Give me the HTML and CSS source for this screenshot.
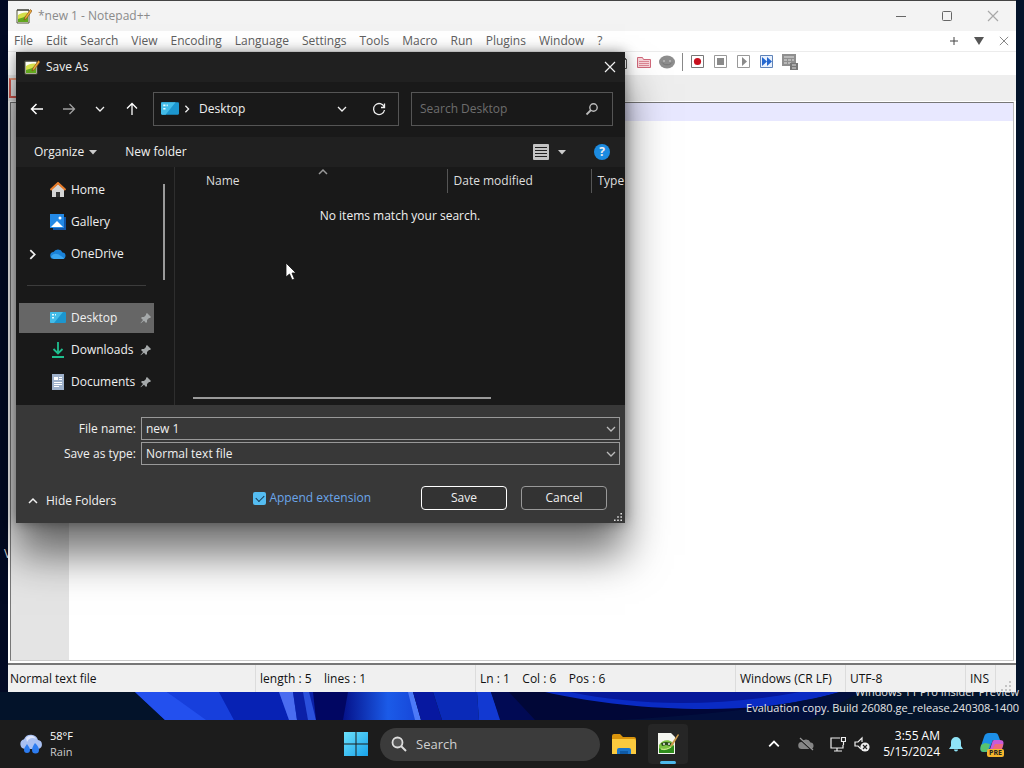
FILE: index.html
```html
<!DOCTYPE html>
<html lang="en">
<head>
    <meta charset="UTF-8">
    <meta name="viewport" content="width=device-width, initial-scale=1.0">
    <title>*new 1 - Notepad++</title>
    <link rel="stylesheet" href="styles.css">
</head>
<body>
    <!-- shared icons -->
    <svg class="sprite" aria-hidden="true">
        <symbol id="i-npp" viewBox="0 0 16 16">
            <path d="M1 2h12v13H1z" fill="#fdfdf5" stroke="#55583c"/>
            <path d="M2 1v2M4 1v2M6 1v2M8 1v2M10 1v2M12 1v2" stroke="#333"/>
            <path d="M2 7c3-2 7-3 10-2v9H2z" fill="#d5e04a"/>
            <path d="M2 11c3-1 7-2 10-4v7H2z" fill="#63a81e"/>
            <path d="M14.500 1.500L9 9l-1 3 2.500-1.500L16 3z" fill="#f0a93a" stroke="#7a4a12" stroke-width=".6"/>
        </symbol>
        <symbol id="i-down" viewBox="0 0 10 10">
            <path d="M1 3l4 4 4-4" fill="none" stroke="currentColor" stroke-width="1.300"/>
        </symbol>
        <symbol id="i-up" viewBox="0 0 10 10">
            <path d="M1 7l4-4 4 4" fill="none" stroke="currentColor" stroke-width="1.500"/>
        </symbol>
        <symbol id="i-right" viewBox="0 0 10 10">
            <path d="M3 1l4 4-4 4" fill="none" stroke="currentColor" stroke-width="1.600"/>
        </symbol>
        <symbol id="i-close" viewBox="0 0 12 12">
            <path d="M1 1l10 10M11 1L1 11" fill="none" stroke="currentColor" stroke-width="1.200"/>
        </symbol>
        <symbol id="i-caret" viewBox="0 0 8 5">
            <path d="M0 0h8L4 4.500z" fill="currentColor"/>
        </symbol>
        <symbol id="i-pin" viewBox="0 0 12 12">
            <path d="M7 1l4 4-1 1-1 0-2 2 0 2-1 1-2-2.300L.8 11.200.500 11 3 8 1 6l1-1h2l2-2V2z" fill="currentColor"/>
        </symbol>
        <symbol id="i-desktop" viewBox="0 0 16 16">
            <path d="M1 2h14a1 1 0 0 1 1 1v9a1 1 0 0 1-1 1H1a1 1 0 0 1-1-1V3a1 1 0 0 1 1-1z" fill="#1c96cf"/>
            <path d="M1 2h12L4 13H1a1 1 0 0 1-1-1V3a1 1 0 0 1 1-1z" fill="#43bce8"/>
            <path d="M2 4h2v1.500H2zM2 7h2v1.500H2zM5 4h1v1.500H5z" fill="#e6fbff"/>
        </symbol>
    </svg>

    <main class="desktop">
        <svg class="wallpaper" viewBox="0 0 1024 28" preserveAspectRatio="none" aria-hidden="true">
            <defs>
                <linearGradient id="glow">
                    <stop offset="0" stop-color="#05128a"/>
                    <stop offset=".6" stop-color="#1b5be8"/>
                    <stop offset="1" stop-color="#1746d8"/>
                </linearGradient>
            </defs>
            <path d="M0 0h1024v28H0z" fill="#03132a"/>
            <path d="M135 0h170l25 28H165z" fill="#0d2fc9"/>
            <path d="M135 0h32l45 28h-47z" fill="#2350ee"/>
            <path d="M167 0h52l15 28h-28z" fill="#173fdc"/>
            <path d="M219 0h60l10 28h-55z" fill="#0722b4"/>
            <path d="M279 0h14l4 28h-8z" fill="#4a6cf0"/>
            <path d="M293 0h24v28h-20z" fill="#0b20a8"/>
            <path d="M303 0h6l7 28h-8z" fill="#2b50dc"/>
            <path d="M313 0h42v28h-39z" fill="#010662"/>
            <path d="M348 0h62l8 28h-75z" fill="url(#glow)"/>
            <path d="M408 0h5l8 28h-6z" fill="#4d7af8"/>
            <path d="M413 0h20l9 28h-21z" fill="#0718a0"/>
            <path d="M433 0h44l2 28h-37z" fill="#0a2ab8"/>
            <path d="M477 0h14l10 28h-22z" fill="#1239d2"/>
            <path d="M491 0h70l80 28H500z" fill="#010a54"/>
            <path d="M509 0h60c40 12 110 19 190 10v18H535z" fill="#010737"/>
            <path d="M545 0h295c-40 12-90 18-145 17-60-1-110-8-150-17z" fill="#0a2bc4"/>
            <path d="M570 0h230c-80 15-165 14-230 0z" fill="#06189a"/>
            <path d="M620 28c100-6 170-14 220-28h60v28z" fill="#020f3d"/>
            <path d="M860 0h164v28H810z" fill="#04142b"/>
        </svg>

        <div class="icon-label">V</div>
        <div class="watermark">
            <div>Windows 11 Pro Insider Preview</div>
            <div>Evaluation copy. Build 26080.ge_release.240308-1400</div>
        </div>

        <!-- Notepad++ -->
        <section class="editor-window">
            <header class="editor-title">
                <svg class="icon16"><use href="#i-npp"/></svg>
                <span class="editor-name">*new 1 - Notepad++</span>
                <button class="win-btn" aria-label="Minimize"><svg viewBox="0 0 12 12"><path d="M1 6.500h10" stroke="currentColor"/></svg></button>
                <button class="win-btn" aria-label="Maximize"><svg viewBox="0 0 12 12"><rect x="1.500" y="1.500" width="9" height="9" rx="1" fill="none" stroke="currentColor"/></svg></button>
                <button class="win-btn dim" aria-label="Close"><svg><use href="#i-close"/></svg></button>
            </header>
            <nav class="menu-bar">
                <button>File</button>
                <button>Edit</button>
                <button>Search</button>
                <button>View</button>
                <button>Encoding</button>
                <button>Language</button>
                <button>Settings</button>
                <button>Tools</button>
                <button>Macro</button>
                <button>Run</button>
                <button>Plugins</button>
                <button>Window</button>
                <button>?</button>
                <div class="tab-tools">
                    <button aria-label="New tab"><svg viewBox="0 0 10 10"><path d="M5 1v8M1 5h8" stroke="#444" fill="none"/></svg></button>
                    <button aria-label="Tab list"><svg viewBox="0 0 10 10"><path d="M0 1h10L5 9z" fill="#555"/></svg></button>
                    <button aria-label="Close tab"><svg class="tab-close"><use href="#i-close"/></svg></button>
                </div>
            </nav>
            <div class="toolbar">
                <button aria-label="Document map"><svg viewBox="0 0 16 16"><path d="M3.500 1.500h6l4 4v9h-10z" fill="#fff" stroke="#555"/><path d="M9.500 1.500v4h4" fill="none" stroke="#555"/></svg></button>
                <button aria-label="Folder as workspace"><svg viewBox="0 0 16 16"><path d="M1.500 3.500h5l1 2h7v8h-13z" fill="#f7d3d8" stroke="#d0687a"/><path d="M3 7.500h10M3 9.500h10M3 11.500h10" stroke="#dd8794"/></svg></button>
                <button aria-label="Monitoring"><svg viewBox="0 0 16 16"><ellipse cx="8" cy="8" rx="8" ry="6.500" fill="#8d8d8d"/><path d="M3 8.500c2 3 8 3 10 0" fill="none" stroke="#777"/><circle cx="5" cy="7" r="1" fill="#bbb"/><circle cx="11" cy="7" r="1" fill="#bbb"/></svg></button>
                <span class="tool-sep"></span>
                <button aria-label="Record macro"><svg viewBox="0 0 16 16"><path d="M1.500 1.500h12v12h-12z" fill="#fff" stroke="#777"/><circle cx="7.500" cy="7.500" r="3.600" fill="#c8101e"/></svg></button>
                <button aria-label="Stop recording"><svg viewBox="0 0 16 16"><path d="M1.500 1.500h12v12h-12z" fill="#fff" stroke="#999"/><path d="M4 4h7v7H4z" fill="#8a8a8a"/></svg></button>
                <button aria-label="Play macro"><svg viewBox="0 0 16 16"><path d="M1.500 1.500h12v12h-12z" fill="#fff" stroke="#999"/><path d="M6 3l5 4.500L6 12z" fill="#8a8a8a"/></svg></button>
                <button aria-label="Run macro many times"><svg viewBox="0 0 16 16"><path d="M1.500 1.500h12v12h-12z" fill="#e9f1fd" stroke="#5f83b8"/><path d="M3 3l5 4.500L3 12zM8 3l5 4.500L8 12z" fill="#2467cf"/></svg></button>
                <button aria-label="Save macro"><svg viewBox="0 0 16 16"><path d="M0 0h14v12H0z" fill="#8f8f8f"/><path d="M2 3h10M2 6h3M6 6h3M10 6h2M2 9h3M6 9h3" stroke="#e2e2e2"/><path d="M8 9h8v7H8z" fill="#777"/><path d="M10 11h4M10 14h4" stroke="#ddd"/></svg></button>
            </div>
            <div class="tab-strip"><span class="tab-icon"></span></div>
            <div class="edit-area">
                <div class="gutter"></div>
                <div class="page"><div class="caret-line"></div></div>
            </div>
            <footer class="status-bar">
                <span class="st-type">Normal text file</span>
                <span class="st-length">length : 5 &nbsp;&nbsp; lines : 1</span>
                <span class="st-pos">Ln : 1 &nbsp;&nbsp; Col : 6 &nbsp;&nbsp; Pos : 6</span>
                <span class="st-eol">Windows (CR LF)</span>
                <span class="st-enc">UTF-8</span>
                <span class="st-ins">INS</span>
                <span class="st-grip"><svg viewBox="0 0 12 12"><path d="M9 1h2v2H9zM9 5h2v2H9zM9 9h2v2H9zM5 5h2v2H5zM5 9h2v2H5zM1 9h2v2H1z" fill="#c4c4c4"/></svg></span>
            </footer>
        </section>

        <!-- Save As dialog -->
        <form class="dialog">
            <header class="dialog-title">
                <svg class="icon16"><use href="#i-npp"/></svg>
                <span>Save As</span>
                <button type="button" class="dialog-close" aria-label="Close"><svg><use href="#i-close"/></svg></button>
            </header>

            <div class="nav-row">
                <div class="nav-buttons">
                    <button type="button" aria-label="Back"><svg viewBox="0 0 14 14"><path d="M13 7H1.500M6.500 2l-5 5 5 5" fill="none" stroke="#fff" stroke-width="1.500"/></svg></button>
                    <button type="button" aria-label="Forward"><svg viewBox="0 0 14 14"><path d="M1 7h11.500M7.500 2l5 5-5 5" fill="none" stroke="#a0a0a0" stroke-width="1.300"/></svg></button>
                    <button type="button" aria-label="Recent locations"><svg class="icon10"><use href="#i-down"/></svg></button>
                    <button type="button" aria-label="Up"><svg viewBox="0 0 14 14"><path d="M7 13V1.500M2 6.500l5-5 5 5" fill="none" stroke="#fff" stroke-width="1.300"/></svg></button>
                </div>
                <div class="address">
                    <svg class="icon18"><use href="#i-desktop"/></svg>
                    <svg class="crumb-arrow"><use href="#i-right"/></svg>
                    <span class="crumb">Desktop</span>
                    <button type="button" aria-label="Previous locations"><svg class="icon10"><use href="#i-down"/></svg></button>
                    <button type="button" aria-label="Refresh"><svg viewBox="0 0 14 14"><path d="M12.200 5A5.500 5.500 0 1 0 12.500 8" fill="none" stroke="#eee" stroke-width="1.300"/><path d="M12.500 1.500v4H9" fill="none" stroke="#eee" stroke-width="1.300"/></svg></button>
                </div>
                <div class="search">
                    <input type="text" placeholder="Search Desktop" aria-label="Search Desktop">
                    <svg viewBox="0 0 14 14"><circle cx="8.500" cy="5.500" r="3.700" fill="none" stroke="#bbb" stroke-width="1.400"/><path d="M6 8l-4.500 4.500" stroke="#bbb" stroke-width="1.800"/></svg>
                </div>
            </div>

            <div class="command-row">
                <button type="button">Organize <svg class="caret"><use href="#i-caret"/></svg></button>
                <button type="button">New folder</button>
                <button type="button" class="view-btn" aria-label="Change your view"><svg class="view-icon" viewBox="0 0 16 16"><path d="M1 0h14a1 1 0 0 1 1 1v14a1 1 0 0 1-1 1H1a1 1 0 0 1-1-1V1a1 1 0 0 1 1-1z" fill="#c4c4c4"/><path d="M2 3.500h12M2 6.500h12M2 9.500h12M2 12.500h12" stroke="#222"/></svg><svg class="caret"><use href="#i-caret"/></svg></button>
                <button type="button" class="help-btn" aria-label="Help">?</button>
            </div>

            <div class="browser">
                <nav class="sidebar">
                    <a href="#home"><svg class="icon16" viewBox="0 0 16 16"><path d="M2 7l6-5 6 5v8H2z" fill="#d5d5d5"/><path d="M6 10h4v5H6z" fill="#333"/><path d="M.500 8L8 1l7.500 7" fill="none" stroke="#e87c2a" stroke-width="2"/></svg><span>Home</span></a>
                    <a href="#gallery"><svg class="icon16" viewBox="0 0 16 16"><path d="M3 3h13v13H3z" fill="#1156a8"/><path d="M0 0h14v14H0z" fill="#2389e6"/><path d="M1 13l6-6 6 6z" fill="#fff"/><circle cx="10" cy="4" r="1.500" fill="#fff"/></svg><span>Gallery</span></a>
                    <a href="#onedrive"><svg class="expand"><use href="#i-right"/></svg><svg class="icon16" viewBox="0 0 16 16"><path d="M4 13a3.500 3.500 0 0 1-.500-7A5 5 0 0 1 12.500 6.500 3.300 3.300 0 0 1 13 13z" fill="#1a82d8"/><path d="M1 11c2-4 6-4 10-1l3.500 2.500L13 13H4z" fill="#3aa5f0"/></svg><span>OneDrive</span></a>
                    <hr>
                    <a href="#desktop" class="selected"><svg class="icon16"><use href="#i-desktop"/></svg><span>Desktop</span><svg class="pin"><use href="#i-pin"/></svg></a>
                    <a href="#downloads"><svg class="icon16" viewBox="0 0 16 16"><path d="M8 0v11M3.500 7L8 11.500 12.500 7M2 15h12" fill="none" stroke="#1fbf8f" stroke-width="1.800"/></svg><span>Downloads</span><svg class="pin"><use href="#i-pin"/></svg></a>
                    <a href="#documents"><svg class="icon16" viewBox="0 0 16 16"><path d="M2 0h12v16H2z" fill="#9fb2cc"/><path d="M4 3h4v3H4z" fill="#fff"/><path d="M9 3.500h3M9 5.500h3M4 8.500h8M4 10.500h8M4 12.500h5" stroke="#fff"/></svg><span>Documents</span><svg class="pin"><use href="#i-pin"/></svg></a>
                    <div class="side-scroll"></div>
                </nav>
                <div class="file-list">
                    <table>
                        <thead>
                            <tr>
                                <th class="col-name">Name <svg class="sort-mark"><use href="#i-up"/></svg></th>
                                <th class="col-date">Date modified</th>
                                <th>Type</th>
                            </tr>
                        </thead>
                    </table>
                    <p class="empty">No items match your search.</p>
                    <div class="list-scroll"></div>
                </div>
            </div>

            <div class="dialog-foot">
                <div class="field">
                    <label for="file-name">File name:</label>
                    <div class="box">
                        <input type="text" id="file-name" value="new 1">
                        <svg class="icon10"><use href="#i-down"/></svg>
                    </div>
                </div>
                <div class="field">
                    <label for="file-type">Save as type:</label>
                    <div class="box">
                        <select id="file-type"><option>Normal text file</option></select>
                        <svg class="icon10"><use href="#i-down"/></svg>
                    </div>
                </div>
                <div class="actions">
                    <button type="button" class="hide-folders"><svg class="icon10"><use href="#i-up"/></svg>Hide Folders</button>
                    <label class="append"><input type="checkbox" checked>Append extension</label>
                    <button type="submit" class="btn primary">Save</button>
                    <button type="button" class="btn">Cancel</button>
                </div>
                <svg class="grip" viewBox="0 0 10 10"><path d="M8 0h2v2H8zM8 4h2v2H8zM8 8h2v2H8zM4 4h2v2H4zM4 8h2v2H4zM0 8h2v2H0z" fill="#ddd"/></svg>
            </div>
        </form>

        <svg class="cursor" viewBox="0 0 12 19" aria-hidden="true"><path d="M1 1v14l3.500-3 2.500 6 2.500-1L7 11h4z" fill="#fff" stroke="#111" stroke-width=".8"/></svg>
    </main>

    <footer class="taskbar">
        <a href="#weather" class="weather">
            <svg viewBox="0 0 24 24"><path d="M6 17a5 5 0 0 1-1-9.800A7.500 7.500 0 0 1 19 8a4.600 4.600 0 0 1 .500 9z" fill="#a9c0f2"/><path d="M7 6a6 6 0 0 1 10 1 6 6 0 0 0-9 3z" fill="#dfe6fb"/><path d="M8 12c2 3 3 4 3 6a3 3 0 0 1-6 0c0-2 1-3 3-6zM16 11c3 3 4 5 4 7a3.500 3.500 0 0 1-7 0c0-2 1-4 3-7z" fill="#2d7cf0"/></svg>
            <span>58°F<br><small>Rain</small></span>
        </a>
        <div class="apps">
            <button class="app" aria-label="Start"><svg viewBox="0 0 24 24"><path d="M0 0h11.500v11.500H0zM12.500 0H24v11.500H12.500zM0 12.500h11.500V24H0zM12.500 12.500H24V24H12.500z" fill="url(#win)"/><defs><linearGradient id="win" x2="1" y2="1"><stop stop-color="#6be0fb"/><stop offset="1" stop-color="#18a2ea"/></linearGradient></defs></svg></button>
            <div class="task-search">
                <svg viewBox="0 0 16 16"><circle cx="6.500" cy="6.500" r="5" fill="#555" stroke="#ddd" stroke-width="1.800"/><path d="M10 10l5 5" stroke="#ddd" stroke-width="2"/></svg>
                <input type="text" placeholder="Search" aria-label="Search">
            </div>
            <button class="app" aria-label="File Explorer"><svg viewBox="0 0 24 24"><path d="M0 4a2 2 0 0 1 2-2h6l3 3h11a2 2 0 0 1 2 2v13H0z" fill="#d9940c"/><path d="M0 7h22a2 2 0 0 1 2 2v13H0z" fill="#fbca3e"/><path d="M5 22v-4a2 2 0 0 1 2-2h10a2 2 0 0 1 2 2v4z" fill="#1b74c9"/><path d="M8 19h8v3H8z" fill="#0f5aa6"/></svg></button>
            <button class="app active" aria-label="Notepad++"><svg viewBox="0 0 24 24"><path d="M2 1h13l4 4v17H2z" fill="#f4f6f0"/><path d="M3 13c3-5 9-6 13-3 2 2 2 5 0 7-4 3-9 3-13 0z" fill="#7cc242"/><path d="M3 16c4 4 10 2 15-3v8H3z" fill="#2f8d1c"/><path d="M5 11l5-1 6 1-2 3-4-1-4 1z" fill="#2a4a1c"/><circle cx="8" cy="12" r="1" fill="#eee"/><circle cx="13" cy="12" r="1" fill="#eee"/><path d="M5 17c4 1 7 0 10-2" fill="none" stroke="#d6ef9a"/><path d="M22 2l-7 10-1 3 3-2 6-10z" fill="#c99a4c"/></svg></button>
        </div>
        <div class="tray">
            <button aria-label="Show hidden icons"><svg class="icon12"><use href="#i-up"/></svg></button>
            <button aria-label="OneDrive"><svg class="icon16" viewBox="0 0 16 16"><path d="M4 13a3.500 3.500 0 0 1-.500-7A5 5 0 0 1 12.500 6.500 3.300 3.300 0 0 1 13 13z" fill="#858585"/><path d="M1 2l13 12" stroke="#1c1c1c" stroke-width="2"/><path d="M2 2l13 12" stroke="#999" stroke-width="1.200"/></svg></button>
            <button aria-label="Network"><svg class="icon16" viewBox="0 0 16 16"><path d="M10 2H1v10h12V9M4 15h8M7 12v3" fill="none" stroke="#eee" stroke-width="1.200"/><path d="M11.500 1.500h4v4h-4zM13.500 5.500V9" fill="#1c1c1c" stroke="#eee" stroke-width="1.200"/></svg></button>
            <button aria-label="Volume"><svg class="icon16" viewBox="0 0 16 16"><path d="M7 13L4 10H1V6h3l4-4v4" fill="none" stroke="#eee" stroke-width="1.200"/><circle cx="11" cy="11" r="4.600" fill="#eee"/><path d="M9 9l4 4M13 9l-4 4" stroke="#222" stroke-width="1.200"/></svg></button>
            <div class="clock">3:55 AM<br>5/15/2024</div>
            <button aria-label="Notifications"><svg class="icon16" viewBox="0 0 16 16"><path d="M8 1a5 5 0 0 1 5 5v4l2 3H1l2-3V6a5 5 0 0 1 5-5zM6 13.500h4a2 2 0 0 1-4 0z" fill="#8fe3f7"/></svg></button>
            <button class="copilot" aria-label="Copilot preview">
                <svg viewBox="0 0 24 24"><path d="M9 1h6c2 0 3 1 3.500 3L20 8h-7L9 18c-.500 1-1 2-3 2H4c-4 0-4-3-3-6L4 5c1-3 2-4 5-4z" fill="#1c8fe8"/><path d="M1 13l4-2 5 1-2 6c-.500 1.500-2 2-4 2-4 0-4-3-3-7z" fill="#58c26e"/><path d="M14 8h6c4 0 4 3 3 6l-2 6H9l3-9c.500-2 1-3 2-3z" fill="#c95bd8"/><path d="M15 12h8l-2 8H11z" fill="#f0697a"/></svg>
                <span class="badge">PRE</span>
            </button>
        </div>
    </footer>
</body>
</html>
```
FILE: styles.css
```css
* {
    box-sizing: border-box;
}
body {
    margin: 0;
    height: 100vh;
    display: flex;
    flex-direction: column;
    overflow: hidden;
    background: #03132a;
    font-family: "Open Sans", "Noto Sans", sans-serif;
    font-size: 12px;
    line-height: 16px;
}
button, input, select {
    font: inherit;
    color: inherit;
    background: none;
    border: none;
    padding: 0;
    margin: 0;
    outline: none;
}
button {
    display: flex;
    align-items: center;
    justify-content: center;
}
a {
    color: inherit;
    text-decoration: none;
}
svg {
    display: block;
    flex: none;
}
.sprite {
    position: absolute;
    width: 0;
    height: 0;
}
.icon10 { width: 10px; height: 10px; }
.icon12 { width: 12px; height: 12px; }
.icon16 { width: 16px; height: 16px; }
.icon18 { width: 18px; height: 18px; }

/* desktop */
.desktop {
    position: relative;
    flex: 1;
    min-height: 0;
    background: linear-gradient(90deg, #020a24, #03132a);
}
.wallpaper {
    position: absolute;
    left: 0;
    bottom: 0;
    width: 100%;
    height: 28px;
}
.icon-label {
    position: absolute;
    left: 4px;
    top: 546px;
    color: #ddd;
}
.watermark {
    position: absolute;
    right: 5px;
    bottom: 4px;
    text-align: right;
    color: #e6e6e6;
    font-size: 11px;
}

/* editor */
.editor-window {
    position: absolute;
    inset: 0 8px 28px 8px;
    display: flex;
    flex-direction: column;
    background: #fff;
    border-top: 1px solid #444;
    color: #111;
}
.editor-title {
    display: flex;
    align-items: center;
    height: 30px;
    padding-left: 8px;
    background: #f3f3f3;
    color: #8a8a8a;
}
.editor-name {
    flex: 1;
    margin-left: 6px;
}
.win-btn {
    width: 46px;
    height: 28px;
    color: #666;
}
.win-btn svg {
    width: 12px;
    height: 12px;
}
.win-btn.dim {
    color: #a8a8a8;
}
.menu-bar {
    display: flex;
    align-items: center;
    gap: 13px;
    height: 20px;
    padding: 0 7px 0 6px;
    color: #606060;
}
.tab-tools {
    display: flex;
    gap: 15px;
    margin-left: auto;
}
.tab-tools svg {
    width: 10px;
    height: 10px;
}
.tab-close {
    color: #888;
}
.toolbar {
    display: flex;
    align-items: center;
    gap: 7px;
    height: 24px;
    padding: 0 0 3px 605px;
    border-top: 1px solid #ececec;
}
.toolbar svg {
    width: 16px;
    height: 16px;
}
.tool-sep {
    width: 1px;
    height: 18px;
    background: #888;
}
.tab-strip {
    height: 26px;
    padding: 3px 1px;
    background: #eee;
}
.tab-icon {
    display: block;
    width: 14px;
    height: 20px;
    border: 2px solid #d85a50;
    border-top-color: #f0a080;
}
.edit-area {
    flex: 1;
    display: flex;
    margin: 1px 2px 0 2px;
    border: 1px solid #777;
    border-right-color: #bbb;
    border-bottom-color: #ccc;
}
.gutter {
    width: 58px;
    background: #e4e4e4;
}
.page {
    flex: 1;
}
.caret-line {
    height: 18px;
    background: #e8e8ff;
}
.status-bar {
    display: flex;
    height: 29px;
    margin-top: 2px;
    border-top: 2px solid #777;
    background: #f0f0f0;
    line-height: 27px;
    white-space: pre;
}
.status-bar span {
    padding-left: 4px;
    border-left: 1px solid #dcdcdc;
    flex: none;
}
.status-bar .st-type {
    width: 247px;
    padding-left: 2px;
    border-left: none;
}
.status-bar .st-length { width: 220px; }
.status-bar .st-pos { flex: 1; }
.status-bar .st-eol { width: 110px; }
.status-bar .st-enc { width: 120px; }
.status-bar .st-ins { width: 30px; }
.status-bar .st-grip {
    display: flex;
    align-items: flex-end;
    width: 21px;
}
.st-grip svg {
    width: 12px;
    height: 12px;
}

/* save dialog */
.dialog {
    position: absolute;
    left: 16px;
    top: 52px;
    width: 609px;
    background: #191919;
    color: #f0f0f0;
    box-shadow: 0 32px 40px rgba(0,0,0,0.55), 0 0 12px rgba(0,0,0,0.4);
}
.dialog-title {
    display: flex;
    align-items: center;
    gap: 6px;
    height: 30px;
    padding: 0 0 0 8px;
    background: #202020;
}
.dialog-close {
    width: 30px;
    height: 28px;
    margin-left: auto;
}
.dialog-close svg {
    width: 12px;
    height: 12px;
}
.nav-row {
    display: flex;
    align-items: center;
    gap: 12px;
    height: 55px;
    padding: 0 12px 2px 14px;
}
.nav-buttons {
    display: flex;
    justify-content: space-between;
    width: 111px;
    padding-right: 2px;
}
.nav-buttons button {
    width: 14px;
    height: 20px;
}
.nav-buttons svg:not(.icon10) {
    width: 14px;
    height: 14px;
}
.address {
    display: flex;
    align-items: center;
    flex: 1;
    height: 34px;
    padding: 0 12px 0 7px;
    border: 1px solid #555;
}
.address button {
    width: 14px;
    height: 20px;
    margin-left: 23px;
}
.address button svg:not(.icon10) {
    width: 14px;
    height: 14px;
}
.crumb-arrow {
    width: 8px;
    height: 8px;
    margin: 0 8px 0 4px;
}
.crumb {
    flex: 1;
}
.search {
    display: flex;
    align-items: center;
    width: 202px;
    height: 34px;
    padding: 0 13px 0 8px;
    border: 1px solid #555;
}
.search input {
    flex: 1;
    min-width: 0;
}
.search input::placeholder {
    color: #6d6d6d;
}
.search svg {
    width: 14px;
    height: 14px;
}
.command-row {
    display: flex;
    align-items: center;
    gap: 28px;
    height: 30px;
    padding: 0 15px 0 18px;
    background: #202020;
}
.caret {
    width: 8px;
    height: 5px;
    margin-left: 5px;
    color: #ccc;
}
.view-btn {
    margin-left: auto;
}
.view-icon {
    width: 16px;
    height: 16px;
    margin-right: 4px;
}
.help-btn {
    width: 16px;
    height: 16px;
    border-radius: 50%;
    background: #1c8be0;
    font-weight: bold;
}
.browser {
    display: flex;
    height: 238px;
}
.sidebar {
    position: relative;
    width: 159px;
    padding: 8px 20px 0 3px;
    border-right: 1px solid #2e2e2e;
}
.sidebar a {
    position: relative;
    display: flex;
    align-items: center;
    gap: 5px;
    height: 30px;
    margin-bottom: 2px;
    padding: 0 2px 0 31px;
}
.sidebar a.selected {
    background: #666;
}
.sidebar hr {
    height: 1px;
    margin: 16px 8px 17px;
    border: none;
    background: #3c3c3c;
}
.expand {
    position: absolute;
    left: 8px;
    width: 11px;
    height: 11px;
}
.pin {
    width: 12px;
    height: 12px;
    margin-left: auto;
    color: #a5a9aa;
}
.side-scroll {
    position: absolute;
    right: 9px;
    top: 17px;
    width: 2px;
    height: 96px;
    background: #9a9a9a;
}
.file-list {
    position: relative;
    flex: 1;
    min-width: 0;
    padding-top: 2px;
    overflow: hidden;
}
.file-list table {
    width: 100%;
    border-collapse: collapse;
    table-layout: fixed;
}
.file-list th {
    height: 24px;
    padding: 0 0 0 6px;
    border-left: 1px solid #555;
    color: #dedede;
    font-weight: normal;
    text-align: left;
}
.file-list .col-name {
    position: relative;
    width: 272px;
    padding-left: 31px;
    border-left: none;
}
.file-list .col-date {
    width: 144px;
}
.sort-mark {
    position: absolute;
    left: 143px;
    top: -2px;
    width: 10px;
    height: 10px;
    color: #999;
}
.empty {
    margin: 15px 0;
    text-align: center;
}
.list-scroll {
    position: absolute;
    left: 18px;
    bottom: 6px;
    width: 298px;
    height: 2px;
    background: #9a9a9a;
}
.dialog-foot {
    position: relative;
    padding: 12px 5px 13px 0;
    background: #383838;
}
.field {
    display: flex;
    align-items: center;
    gap: 5px;
    margin-bottom: 2px;
}
.field label {
    width: 120px;
    text-align: right;
}
.box {
    display: flex;
    align-items: center;
    flex: 1;
    height: 23px;
    padding-right: 3px;
    border: 1px solid #999;
    background: #383838;
}
.box input, .box select {
    flex: 1;
    min-width: 0;
    height: 20px;
    padding-left: 4px;
    appearance: none;
}
.box svg {
    color: #bbb;
}
.actions {
    display: flex;
    align-items: center;
    gap: 14px;
    height: 24px;
    margin-top: 21px;
    padding: 0 13px 0 12px;
}
.hide-folders {
    gap: 8px;
    padding-top: 6px;
}
.append {
    display: flex;
    align-items: center;
    gap: 3px;
    margin: 0 36px 0 auto;
    color: #6ba6ea;
}
.append input {
    appearance: none;
    width: 13px;
    height: 13px;
    border-radius: 2px;
    background: #55bdf2;
}
.append input:checked::before {
    content: "";
    display: block;
    width: 7px;
    height: 4px;
    margin: 3px;
    border: solid #143a55;
    border-width: 0 0 1px 1px;
    transform: rotate(-45deg);
}
.btn {
    width: 86px;
    height: 24px;
    border: 1px solid #999;
    border-radius: 4px;
    background: #333;
}
.btn.primary {
    border-color: #fff;
}
.grip {
    position: absolute;
    right: 3px;
    bottom: 2px;
    width: 8px;
    height: 8px;
}
.cursor {
    position: absolute;
    left: 285px;
    top: 262px;
    width: 12px;
    height: 19px;
}

/* taskbar */
.taskbar {
    display: grid;
    grid-template-columns: 1fr auto 1fr;
    align-items: center;
    height: 48px;
    background: #1c1c1c;
    color: #fff;
}
.weather {
    display: flex;
    align-items: center;
    gap: 7px;
    padding-left: 19px;
}
.weather svg {
    width: 24px;
    height: 24px;
}
.weather span {
    font-size: 11px;
}
.weather small {
    font-size: 11px;
    color: #ccc;
}
.apps {
    display: flex;
    align-items: center;
    gap: 4px;
}
.app {
    width: 40px;
    height: 40px;
    border-radius: 4px;
}
.app svg {
    width: 24px;
    height: 24px;
}
.app.active {
    position: relative;
    background: #262626;
}
.app.active::after {
    content: "";
    position: absolute;
    left: 12px;
    bottom: 0;
    width: 16px;
    height: 3px;
    border-radius: 2px;
    background: #4cb8ea;
}
.task-search {
    display: flex;
    align-items: center;
    gap: 9px;
    width: 220px;
    height: 33px;
    padding: 0 11px;
    border-radius: 17px;
    background: #3b3b3b;
}
.task-search svg {
    width: 16px;
    height: 16px;
}
.task-search input {
    flex: 1;
    min-width: 0;
    font-size: 13px;
}
.task-search input::placeholder {
    color: #d0d0d0;
}
.tray {
    display: flex;
    align-items: center;
    justify-content: flex-end;
    gap: 8px;
    padding-right: 20px;
}
.tray button:first-child {
    margin-right: 10px;
}
.tray button:nth-child(2) {
    margin-right: 8px;
}
.clock {
    margin-left: 5px;
    font-size: 12px;
    text-align: right;
}
.copilot {
    position: relative;
    margin-left: 8px;
}
.copilot svg {
    width: 24px;
    height: 24px;
}
.badge {
    position: absolute;
    right: 0;
    bottom: -1px;
    padding: 0 2px;
    border-radius: 2px;
    background: #f6b52c;
    color: #222;
    font-size: 7px;
    font-weight: bold;
    line-height: 8px;
}
```
